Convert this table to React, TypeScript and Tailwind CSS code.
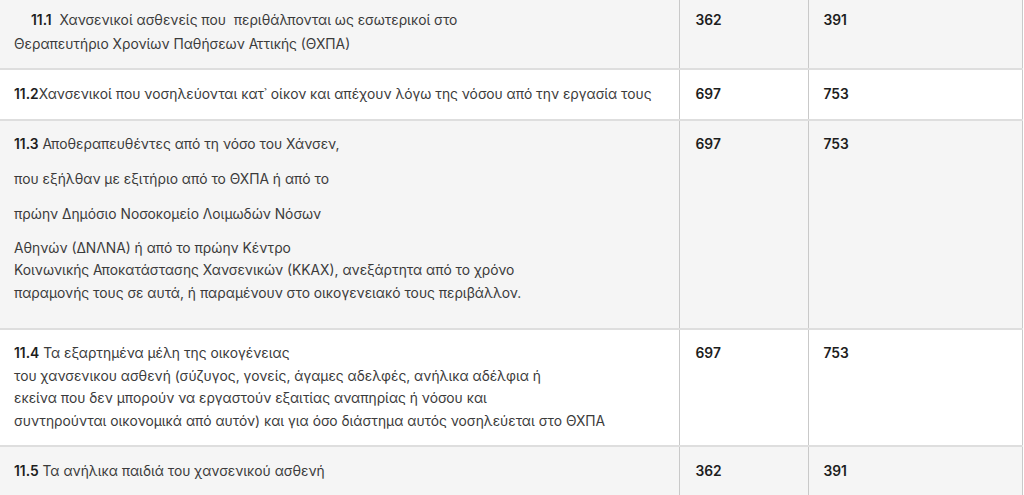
import React from "react";

type Row = {
  bg: string;
  pad: string;
  text: React.ReactNode;
  a: string;
  b: string;
};

const rows: Row[] = [
  {
    bg: "bg-[#f5f5f5]",
    pad: "pt-[8px] pb-[12px]",
    a: "362",
    b: "391",
    text: (
      <p className="leading-[24px] indent-[17px]">
        <strong className="font-semibold text-[#1d1d1d]">11.1</strong>&nbsp; Χανσενικοί ασθενείς που&nbsp; περιθάλπονται ως εσωτερικοί στο
        <br />
        Θεραπευτήριο Χρονίων Παθήσεων Αττικής (ΘΧΠΑ)
      </p>
    ),
  },
  {
    bg: "bg-white",
    pad: "pt-[13px] pb-[13px]",
    a: "697",
    b: "753",
    text: (
      <p>
        <strong className="font-semibold text-[#1d1d1d]">11.2</strong>Χανσενικοί που νοσηλεύονται κατ᾽ οίκον και απέχουν λόγω της νόσου από την εργασία τους
      </p>
    ),
  },
  {
    bg: "bg-[#f5f5f5]",
    pad: "pt-[12px] pb-[11px]",
    a: "697",
    b: "753",
    text: (
      <div className="flex flex-col gap-[13px]">
        <p>
          <strong className="font-semibold text-[#1d1d1d]">11.3</strong> Αποθεραπευθέντες από τη νόσο του Χάνσεν,
        </p>
        <p>που εξήλθαν με εξιτήριο από το ΘΧΠΑ ή από το</p>
        <p className="-mt-[1px]">πρώην Δημόσιο Νοσοκομείο Λοιμωδών Νόσων</p>
        <p className="-mt-[1px] mb-[13px] leading-[22.4px]">
          Αθηνών (ΔΝΛΝΑ) ή από το πρώην Κέντρο
          <br />
          Κοινωνικής Αποκατάστασης Χανσενικών (ΚΚΑΧ), ανεξάρτητα από το χρόνο
          <br />
          παραμονής τους σε αυτά, ή παραμένουν στο οικογενειακό τους περιβάλλον.
        </p>
      </div>
    ),
  },
  {
    bg: "bg-white",
    pad: "pt-[12px] pb-[13px]",
    a: "697",
    b: "753",
    text: (
      <p>
        <strong className="font-semibold text-[#1d1d1d]">11.4</strong> Τα εξαρτημένα μέλη της οικογένειας
        <br />
        του χανσενικου ασθενή (σύζυγος, γονείς, άγαμες αδελφές, ανήλικα αδέλφια ή
        <br />
        εκείνα που δεν μπορούν να εργαστούν εξαιτίας αναπηρίας ή νόσου και
        <br />
        συντηρούνται οικονομικά από αυτόν) και για όσο διάστημα αυτός νοσηλεύεται στο ΘΧΠΑ
      </p>
    ),
  },
  {
    bg: "bg-[#f5f5f5]",
    pad: "pt-[13px] pb-[20px]",
    a: "362",
    b: "391",
    text: (
      <p>
        <strong className="font-semibold text-[#1d1d1d]">11.5</strong> Τα ανήλικα παιδιά του χανσενικού ασθενή
      </p>
    ),
  },
];

export default function App() {
  return (
    <div className="w-[1024px] h-[495px] overflow-hidden bg-white font-['Inter','Noto_Sans',sans-serif] text-[13.8px] leading-[22.5px] text-[#3b3b3b]">
      <table className="w-[1023px] border-collapse">
        <tbody>
          {rows.map((r, i) => (
            <tr key={i} className={`${r.bg} border-b-2 border-[#dedede]`}>
              <td className={`w-[679px] pl-[14px] pr-4 align-top ${r.pad}`}>{r.text}</td>
              <td className={`w-[129px] px-4 align-top border-x border-[#c9c9c9] font-semibold text-[#1d1d1d] ${r.pad}`}>
                <p className={i === 0 ? "leading-[24px]" : ""}>{r.a}</p>
              </td>
              <td className={`px-[15px] align-top border-r border-[#c9c9c9] font-semibold text-[#1d1d1d] ${r.pad}`}>
                <p className={i === 0 ? "leading-[24px]" : ""}>{r.b}</p>
              </td>
            </tr>
          ))}
        </tbody>
      </table>
    </div>
  );
}
